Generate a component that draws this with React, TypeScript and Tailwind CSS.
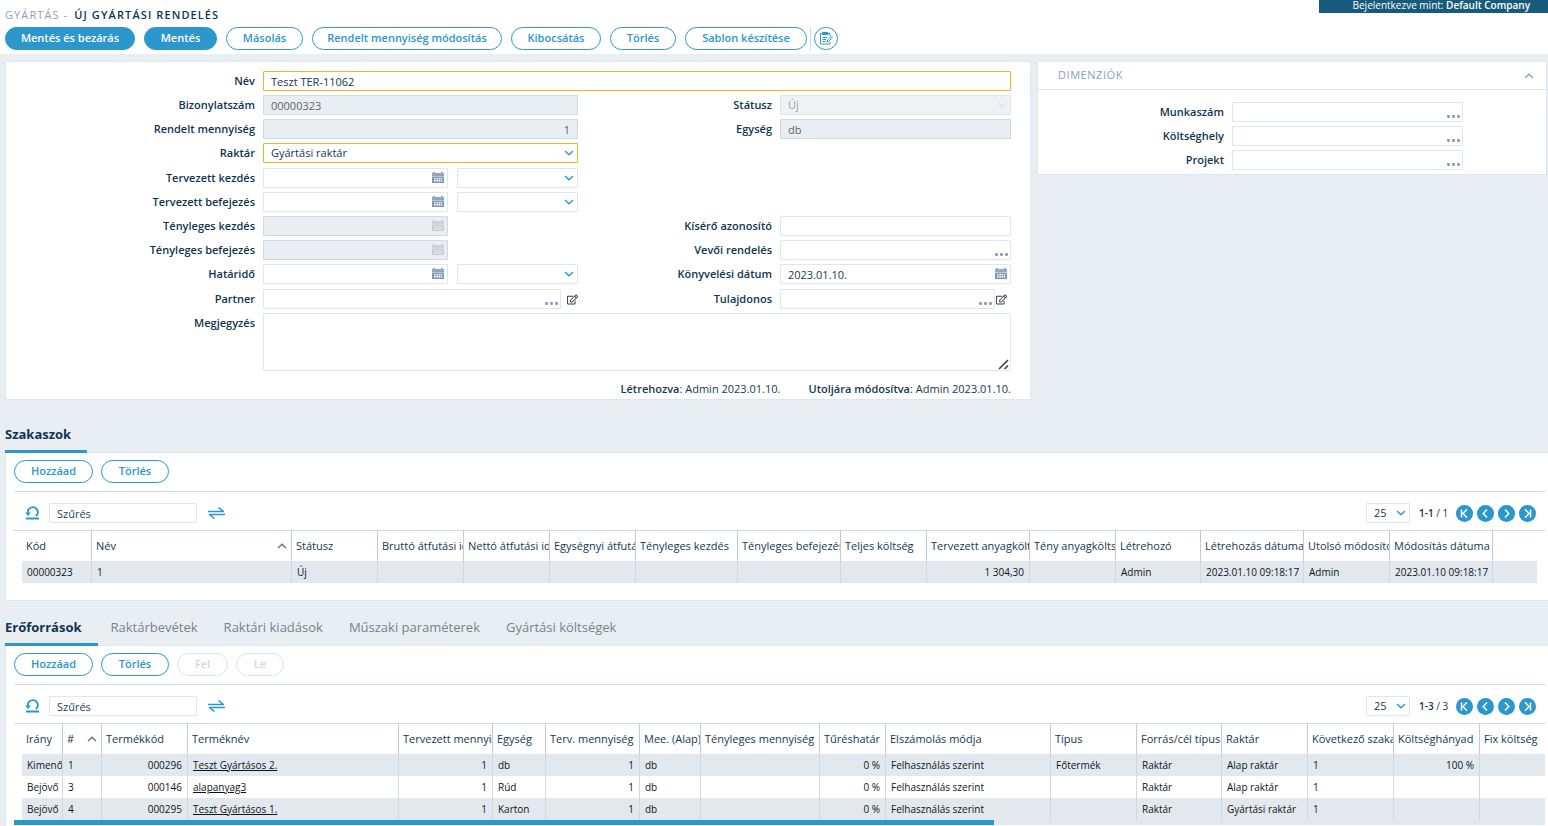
import type { ReactNode } from "react";
import clsx from "clsx";
import { FaRegEdit } from "react-icons/fa";

interface Column {
  title: string;
  width: string;
  numeric?: boolean;
  sorted?: boolean;
  link?: boolean;
}

const stageColumns: Column[] = [
  { title: "Kód", width: "w-[70px]" },
  { title: "Név", width: "w-[200px]", sorted: true },
  { title: "Státusz", width: "w-[86px]" },
  { title: "Bruttó átfutási idő", width: "w-[86px]" },
  { title: "Nettó átfutási idő", width: "w-[86px]" },
  { title: "Egységnyi átfutási idő", width: "w-[86px]" },
  { title: "Tényleges kezdés", width: "w-[102px]" },
  { title: "Tényleges befejezés", width: "w-[103px]" },
  { title: "Teljes költség", width: "w-[86px]" },
  { title: "Tervezett anyagköltség", width: "w-[103px]", numeric: true },
  { title: "Tény anyagköltség", width: "w-[86px]" },
  { title: "Létrehozó", width: "w-[85px]" },
  { title: "Létrehozás dátuma", width: "w-[103px]" },
  { title: "Utolsó módosító", width: "w-[86px]" },
  { title: "Módosítás dátuma", width: "w-[103px]" },
  { title: "", width: "w-auto" },
];

const stageRows = [
  ["00000323", "1", "Új", "", "", "", "", "", "", "1 304,30", "", "Admin", "2023.01.10 09:18:17", "Admin", "2023.01.10 09:18:17", ""],
];

const resourceColumns: Column[] = [
  { title: "Irány", width: "w-[41px]" },
  { title: "#", width: "w-[39px]", sorted: true },
  { title: "Termékkód", width: "w-[86px]", numeric: true },
  { title: "Terméknév", width: "w-[211px]", link: true },
  { title: "Tervezett mennyiség", width: "w-[94px]", numeric: true },
  { title: "Egység", width: "w-[53px]" },
  { title: "Terv. mennyiség", width: "w-[94px]", numeric: true },
  { title: "Mee. (Alap)", width: "w-[61px]" },
  { title: "Tényleges mennyiség", width: "w-[119px]", numeric: true },
  { title: "Tűréshatár", width: "w-[66px]", numeric: true },
  { title: "Elszámolás módja", width: "w-[165px]" },
  { title: "Típus", width: "w-[86px]" },
  { title: "Forrás/cél típus", width: "w-[85px]" },
  { title: "Raktár", width: "w-[86px]" },
  { title: "Következő szakasz", width: "w-[86px]" },
  { title: "Költséghányad", width: "w-[86px]", numeric: true },
  { title: "Fix költség", width: "w-[86px]", numeric: true },
];

const resourceRows = [
  ["Kimenő", "1", "000296", "Teszt Gyártásos 2.", "1", "db", "1", "db", "", "0 %", "Felhasználás szerint", "Főtermék", "Raktár", "Alap raktár", "1", "100 %", ""],
  ["Bejövő", "3", "000146", "alapanyag3", "1", "Rúd", "1", "db", "", "0 %", "Felhasználás szerint", "", "Raktár", "Alap raktár", "1", "", ""],
  ["Bejövő", "4", "000295", "Teszt Gyártásos 1.", "1", "Karton", "1", "db", "", "0 %", "Felhasználás szerint", "", "Raktár", "Gyártási raktár", "1", "", ""],
];

function Chevron({ up, className }: { up?: boolean; className?: string }) {
  return (
    <svg viewBox="0 0 10 6" className={clsx("h-[6px] w-[10px] shrink-0", className)} fill="none" stroke="currentColor" strokeWidth="1.3">
      <path d={up ? "M1 5 L5 1.2 L9 5" : "M1 1 L5 4.8 L9 1"} />
    </svg>
  );
}

function CalendarIcon() {
  return (
    <svg viewBox="0 0 12 11" className="h-[11px] w-[12px]" fill="currentColor">
      <path d="M1 0h2v1h6V0h2v1h1v3H0V1h1z" opacity="0.85" />
      <path fillRule="evenodd" d="M0 4.6h12V11H0zM2 6v1.2h1.6V6zM4.4 6v1.2H6V6zM6.6 6v1.2h1.6V6zM8.8 6v1.2h1.4V6zM2 8v1.6h1.6V8zM4.4 8v1.6H6V8zM6.6 8v1.6h1.6V8zM8.8 8v1.6h1.4V8z" />
    </svg>
  );
}

function DotsIcon() {
  return (
    <svg viewBox="0 0 13 3" className="h-[3px] w-[13px]" fill="currentColor">
      <rect x="0" width="3" height="3" rx="1" />
      <rect x="5" width="3" height="3" rx="1" />
      <rect x="10" width="3" height="3" rx="1" />
    </svg>
  );
}

const fieldBase = "h-5 w-full min-w-0 rounded-[1px] border px-[7px] text-[11px]";

interface InputProps {
  id: string;
  value?: string;
  tone?: "normal" | "required";
  disabled?: boolean;
  alignRight?: boolean;
}

function TextInput({ id, value = "", tone = "normal", disabled, alignRight }: InputProps) {
  return (
    <input
      id={id}
      type="text"
      defaultValue={value}
      disabled={disabled}
      className={clsx(
        fieldBase,
        alignRight && "text-right",
        disabled
          ? "border-[#ced9e3] bg-[#e9eef3] text-[#5f6468]"
          : tone === "required"
            ? "border-[#fbb11f] bg-white text-[#17384f]"
            : "border-[#dfe7ee] bg-white text-[#17384f]"
      )}
    />
  );
}

function LookupInput({ id }: { id: string }) {
  return (
    <div className="relative flex min-w-0 flex-1">
      <TextInput id={id} />
      <button aria-label="Keresés" className="absolute right-[3px] bottom-1 text-[#8aa1be]">
        <DotsIcon />
      </button>
    </div>
  );
}

function DateInput({ id, value, disabled }: InputProps) {
  return (
    <div className="relative flex min-w-0 flex-1">
      <TextInput id={id} value={value} disabled={disabled} />
      <button
        aria-label="Naptár"
        disabled={disabled}
        className={clsx("absolute top-1 right-[4px]", disabled ? "text-[#c7cdd1]" : "text-[#8098b8]")}
      >
        <CalendarIcon />
      </button>
    </div>
  );
}

function SelectInput({ id, value = "", tone = "normal", disabled, label }: InputProps & { label?: string }) {
  return (
    <div className="relative flex w-full min-w-0">
      <select
        id={id}
        aria-label={label}
        disabled={disabled}
        className={clsx(
          fieldBase,
          "appearance-none",
          disabled
            ? "border-[#dfe7ee] bg-[#eff3f6] text-[#9aa0a5] opacity-100"
            : tone === "required"
              ? "border-[#fbb11f] bg-white text-[#17384f]"
              : "border-[#dfe7ee] bg-white text-[#17384f]"
        )}
      >
        <option>{value}</option>
      </select>
      <Chevron
        className={clsx("pointer-events-none absolute top-[7px] right-[4px]", disabled ? "text-[#d7e0e8]" : "text-[#2b97cd]")}
      />
    </div>
  );
}

function Label({ htmlFor, children }: { htmlFor: string; children: ReactNode }) {
  return (
    <label htmlFor={htmlFor} className="pr-2 text-right text-[11px] leading-5 font-semibold whitespace-nowrap text-[#0f3550]">
      {children}
    </label>
  );
}

function FormRow({ children }: { children: ReactNode }) {
  return <div className="grid grid-cols-[257fr_315fr_202fr_231fr]">{children}</div>;
}

function PlannedTime({ id, label }: { id: string; label: string }) {
  return (
    <FormRow>
      <Label htmlFor={id}>{label}</Label>
      <div className="flex gap-[9px]">
        <DateInput id={id} />
        <div className="w-[121px]">
          <SelectInput id={`${id}-time`} label={`${label} időpont`} />
        </div>
      </div>
    </FormRow>
  );
}

function PillButton({ children, solid, disabled, width }: { children: ReactNode; solid?: boolean; disabled?: boolean; width: string }) {
  return (
    <button
      disabled={disabled}
      className={clsx(
        "h-[23px] rounded-full border text-[11px] font-semibold whitespace-nowrap",
        width,
        solid
          ? "border-[#2b97cd] bg-[#2b97cd] text-white"
          : disabled
            ? "border-[#dbe3ea] bg-white text-[#cfdae4]"
            : "border-[#2b97cd] bg-white text-[#2b97cd]"
      )}
    >
      {children}
    </button>
  );
}

const pagerIcons = [
  { label: "Első oldal", d: "M5.5 4.5v8M11 4.2L7 8.5l4 4.3" },
  { label: "Előző oldal", d: "M10 4.5L6.2 8.5l3.8 4" },
  { label: "Következő oldal", d: "M7 4.5l3.8 4L7 12.5" },
  { label: "Utolsó oldal", d: "M11.5 4.5v8M6 4.2l4 4.3-4 4.3" },
];

function FilterBar({ id, range, total }: { id: string; range: string; total: string }) {
  return (
    <div className="flex items-center border-b border-[#cfdae4] pt-[11px] pr-[9px] pb-[7px] pl-[11px]">
      <button aria-label="Visszaállítás" className="text-[#2b97cd]">
        <svg viewBox="0 0 15 14" className="h-[14px] w-[15px]" fill="none" stroke="currentColor">
          <path d="M3 7A4.900 4.900 0 1 1 10.800 10" strokeWidth="1.8" />
          <path d="M0 6.500h6L3 10z" fill="currentColor" stroke="none" />
          <path d="M1 12.500h13" strokeWidth="2" />
        </svg>
      </button>
      <input
        id={id}
        type="text"
        aria-label="Szűrés"
        placeholder="Szűrés"
        className="ml-[9px] h-5 w-[148px] rounded-[1px] border border-[#dfe7ee] bg-white px-[7px] text-[11px] placeholder:text-[#1d425c]"
      />
      <button aria-label="Oszlopok" className="ml-[11px] text-[#2b97cd]">
        <svg viewBox="0 0 17 12" className="h-3 w-[17px]" fill="none" stroke="currentColor" strokeWidth="1.6">
          <path d="M0 4.500h16M10.500 0.500L15.500 4.500M17 7.500H1M6.500 11.500L1.500 7.500" />
        </svg>
      </button>

      <div className="ml-auto flex items-center">
        <div className="w-11">
          <SelectInput id={`${id}-size`} value="25" label="Sorok száma" />
        </div>
        <span className="ml-[9px] w-[31px] text-[10px] leading-5 whitespace-nowrap text-[#17384f]">
          <b className="font-semibold">{range}</b> / {total}
        </span>
        <div className="ml-[6px] flex gap-1">
          {pagerIcons.map((icon) => (
            <button key={icon.label} aria-label={icon.label} className="h-[17px] w-[17px] rounded-full bg-[#2b97cd] text-white">
              <svg viewBox="0 0 17 17" className="h-full w-full" fill="none" stroke="currentColor" strokeWidth="1.5">
                <path d={icon.d} />
              </svg>
            </button>
          ))}
        </div>
      </div>
    </div>
  );
}

function DataTable({ columns, rows, className }: { columns: Column[]; rows: string[][]; className: string }) {
  return (
    <table className={clsx("table-fixed border-separate border-spacing-0", className)}>
      <colgroup>
        {columns.map((column, i) => (
          <col key={i} className={column.width} />
        ))}
      </colgroup>
      <thead>
        <tr className="h-[30px]">
          {columns.map((column, i) => (
            <th
              key={i}
              className="overflow-hidden border-r border-[#c1cbd3] p-0 pl-1 text-left text-[11px] font-normal whitespace-nowrap text-[#17384f] last:border-r-0"
            >
              {column.sorted ? (
                <span className="flex items-center justify-between pr-1">
                  {column.title}
                  <Chevron up className="text-[#5a7184]" />
                </span>
              ) : (
                column.title
              )}
            </th>
          ))}
        </tr>
      </thead>
      <tbody>
        {rows.map((row, r) => (
          <tr key={r} className="h-[22px] odd:bg-[#e1e8ee]">
            {row.map((cell, i) => (
              <td
                key={i}
                className={clsx(
                  "overflow-hidden border-r border-[#cfd9e2] p-0 px-[5px] text-[10px] whitespace-nowrap text-[#101418] last:border-r-0",
                  columns[i].numeric && "text-right"
                )}
              >
                {columns[i].link ? (
                  <a href="#" className="underline">
                    {cell}
                  </a>
                ) : (
                  cell
                )}
              </td>
            ))}
          </tr>
        ))}
      </tbody>
    </table>
  );
}

function Tabs({ items }: { items: string[] }) {
  return (
    <div role="tablist" className="relative -mb-px flex">
      {items.map((item, i) => (
        <button
          key={item}
          role="tab"
          aria-selected={i === 0}
          className={clsx(
            "h-[33px] border-b-[3px] text-[13px]",
            i === 0 ? "border-[#2b97cd] pr-4 font-bold text-[#0f3550]" : "border-transparent px-[13px] text-[#74838f]"
          )}
        >
          {item}
        </button>
      ))}
    </div>
  );
}

export default function App() {
  return (
    <div className="min-h-screen overflow-hidden bg-[#e9eef3] font-['Open_Sans','Noto_Sans',sans-serif] text-[#17384f]">
      <header className="relative bg-white pt-[7px] pb-1 pl-[5px]">
        <h1 className="text-[11px] leading-4 tracking-widest">
          <span className="mr-[6px] text-[#8d9fb5]">GYÁRTÁS -</span>
          <span className="font-semibold text-[#0f3550]">ÚJ GYÁRTÁSI RENDELÉS</span>
        </h1>
        <div className="absolute top-0 right-0 flex h-[13px] w-[229px] items-end justify-end bg-[#175a7c] pr-[18px] text-[10px] leading-4 whitespace-nowrap text-white">
          <span>
            Bejelentkezve mint: <b className="font-semibold">Default Company</b>
          </span>
        </div>

        <div className="mt-1 flex items-center gap-[9px]">
          <PillButton solid width="w-[130px]">Mentés és bezárás</PillButton>
          <PillButton solid width="w-[73px]">Mentés</PillButton>
          <PillButton width="w-[77px]">Másolás</PillButton>
          <PillButton width="w-[190px]">Rendelt mennyiség módosítás</PillButton>
          <PillButton width="w-[90px]">Kibocsátás</PillButton>
          <PillButton width="w-[66px]">Törlés</PillButton>
          <div className="flex items-center gap-[3px]">
            <PillButton width="w-[122px]">Sablon készítése</PillButton>
            <span className="h-[23px] w-px bg-[#cfdae4]" />
            <button aria-label="Jegyzet" className="flex h-[23px] w-6 items-center justify-center rounded-full border border-[#2b97cd] text-[#2b97cd]">
              <svg viewBox="0 0 14 13" className="h-[13px] w-[14px]" fill="none" stroke="currentColor" strokeWidth="1">
                <path d="M3.500 1.500H1.500v10.500h9.500v-2M9 1.500h2V4.500" />
                <path d="M3.500 0.500h5.500v2H3.500z" fill="currentColor" />
                <path d="M3.500 5.500h4.500M3.500 7.500h3.500M3.500 9.500h3" />
                <path d="M8 9.800l0.500-1.800 3.800-3.500 1 1-3.500 3.800z" />
              </svg>
            </button>
          </div>
        </div>
      </header>

      <main>
        <div className="grid grid-cols-[1026fr_510fr] items-start gap-[6px] pt-[7px] pr-px pl-[5px]">
          <section className="border border-[#dfe7ee] bg-white pt-[9px] pr-[19px] pb-px">
            <div className="flex flex-col gap-[5px]">
              <div className="flex flex-col gap-1">
                <div className="grid grid-cols-[257fr_748fr]">
                  <Label htmlFor="name">Név</Label>
                  <TextInput id="name" value="Teszt TER-11062" tone="required" />
                </div>
                <FormRow>
                  <Label htmlFor="doc-number">Bizonylatszám</Label>
                  <TextInput id="doc-number" value="00000323" disabled />
                  <Label htmlFor="status">Státusz</Label>
                  <SelectInput id="status" value="Új" disabled />
                </FormRow>
                <FormRow>
                  <Label htmlFor="quantity">Rendelt mennyiség</Label>
                  <TextInput id="quantity" value="1" disabled alignRight />
                  <Label htmlFor="unit">Egység</Label>
                  <TextInput id="unit" value="db" disabled />
                </FormRow>
                <FormRow>
                  <Label htmlFor="warehouse">Raktár</Label>
                  <SelectInput id="warehouse" value="Gyártási raktár" tone="required" />
                </FormRow>
              </div>

              <div className="flex flex-col gap-1">
                <PlannedTime id="planned-start" label="Tervezett kezdés" />
                <PlannedTime id="planned-end" label="Tervezett befejezés" />
                <FormRow>
                  <Label htmlFor="actual-start">Tényleges kezdés</Label>
                  <div className="flex pr-[130px]">
                    <DateInput id="actual-start" disabled />
                  </div>
                  <Label htmlFor="tracking-id">Kísérő azonosító</Label>
                  <TextInput id="tracking-id" />
                </FormRow>
                <FormRow>
                  <Label htmlFor="actual-end">Tényleges befejezés</Label>
                  <div className="flex pr-[130px]">
                    <DateInput id="actual-end" disabled />
                  </div>
                  <Label htmlFor="customer-order">Vevői rendelés</Label>
                  <LookupInput id="customer-order" />
                </FormRow>
                <FormRow>
                  <Label htmlFor="deadline">Határidő</Label>
                  <div className="flex gap-[9px]">
                    <DateInput id="deadline" />
                    <div className="w-[121px]">
                      <SelectInput id="deadline-time" label="Határidő időpont" />
                    </div>
                  </div>
                  <Label htmlFor="booking-date">Könyvelési dátum</Label>
                  <DateInput id="booking-date" value="2023.01.10." />
                </FormRow>
              </div>

              <div className="flex flex-col gap-1">
                <FormRow>
                  <Label htmlFor="partner">Partner</Label>
                  <div className="flex items-center gap-[6px]">
                    <LookupInput id="partner" />
                    <button aria-label="Partner szerkesztése" className="text-[#2f3b45]">
                      <FaRegEdit className="h-[11px] w-[11px]" />
                    </button>
                  </div>
                  <Label htmlFor="owner">Tulajdonos</Label>
                  <div className="flex items-center gap-px pr-1">
                    <LookupInput id="owner" />
                    <button aria-label="Tulajdonos szerkesztése" className="text-[#2f3b45]">
                      <FaRegEdit className="h-[11px] w-[11px]" />
                    </button>
                  </div>
                </FormRow>
                <div className="grid grid-cols-[257fr_748fr]">
                  <Label htmlFor="note">Megjegyzés</Label>
                  <div className="relative flex">
                    <textarea id="note" className="h-[58px] w-full resize-none rounded-[1px] border border-[#dfe7ee] bg-white px-[7px] text-[11px]" />
                    <svg viewBox="0 0 11 11" className="pointer-events-none absolute right-[2px] bottom-[1px] h-[11px] w-[11px]" stroke="#3f3f3f" strokeWidth="1.6">
                      <path d="M1 10L10 1M6.500 10L10 6.500" />
                    </svg>
                  </div>
                </div>
              </div>
            </div>
            <div className="mt-[9px] flex justify-end gap-7 text-[11px] leading-[18px]">
              <span>
                <b className="font-semibold">Létrehozva</b>: Admin 2023.01.10.
              </span>
              <span>
                <b className="font-semibold">Utoljára módosítva</b>: Admin 2023.01.10.
              </span>
            </div>
          </section>

          <section className="border border-[#dfe7ee] bg-white pb-1">
            <div className="flex h-7 items-center justify-between border-b border-[#dfe7ee] pr-3 pl-5 text-[11px] text-[#8aa1be]">
              <h2 className="tracking-wider">DIMENZIÓK</h2>
              <button aria-label="Összecsukás">
                <Chevron up />
              </button>
            </div>
            <div className="flex flex-col gap-1 pt-3">
              {["Munkaszám", "Költséghely", "Projekt"].map((label) => (
                <div key={label} className="grid grid-cols-[194fr_231fr_83fr]">
                  <Label htmlFor={label}>{label}</Label>
                  <LookupInput id={label} />
                </div>
              ))}
            </div>
          </section>
        </div>

        <section className="mt-5 pl-[5px]">
          <Tabs items={["Szakaszok"]} />
          <div className="border-y border-l border-[#dfe7ee] bg-white pt-[7px] pr-[3px] pb-[17px] pl-2">
            <div className="flex gap-2 border-b border-[#cfdae4] pb-2">
              <PillButton width="w-[79px]">Hozzáad</PillButton>
              <PillButton width="w-[68px]">Törlés</PillButton>
            </div>
            <FilterBar id="stage-filter" range="1-1" total="1" />
            <div className="overflow-hidden px-2">
              <DataTable columns={stageColumns} rows={stageRows} className="w-full" />
            </div>
          </div>
        </section>

        <section className="mt-3 pl-[5px]">
          <Tabs items={["Erőforrások", "Raktárbevétek", "Raktári kiadások", "Műszaki paraméterek", "Gyártási költségek"]} />
          <div className="border-t border-l border-[#dfe7ee] bg-white pt-[7px] pr-[3px] pb-px pl-2">
            <div className="flex gap-2 border-b border-[#cfdae4] pb-2">
              <PillButton width="w-[79px]">Hozzáad</PillButton>
              <PillButton width="w-[68px]">Törlés</PillButton>
              <PillButton width="w-[51px]" disabled>Fel</PillButton>
              <PillButton width="w-[48px]" disabled>Le</PillButton>
            </div>
            <FilterBar id="resource-filter" range="1-3" total="3" />
            <div className="overflow-hidden pl-2">
              <DataTable columns={resourceColumns} rows={resourceRows} className="w-[1544px]" />
            </div>
            {/* Horizontal scroll position */}
            <div className="h-[5px] bg-[#e1e8ee]">
              <div className="h-full w-[64%] bg-[#2b97cd]" />
            </div>
          </div>
        </section>
      </main>
    </div>
  );
}
